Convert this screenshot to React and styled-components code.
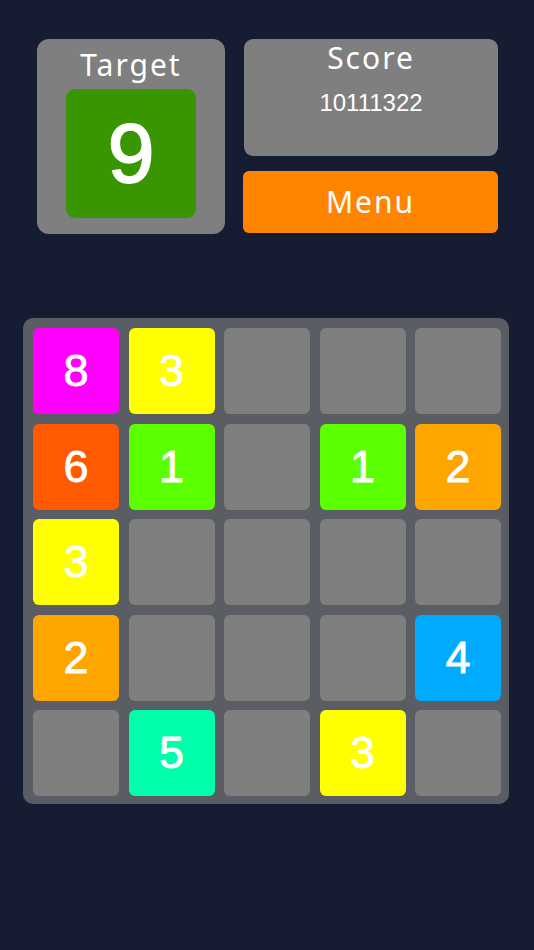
import styled, { createGlobalStyle } from "styled-components";

const GlobalStyle = createGlobalStyle`
  html, body {
    margin: 0;
    padding: 0;
    background: #161c31;
  }
  * {
    box-sizing: border-box;
  }
`;

const board = [
  [8, 3, 0, 0, 0],
  [6, 1, 0, 1, 2],
  [3, 0, 0, 0, 0],
  [2, 0, 0, 0, 4],
  [0, 5, 0, 3, 0],
];

const tileColors = {
  0: "#7f7f7f",
  1: "#5aff00",
  2: "#ffa500",
  3: "#ffff00",
  4: "#00aaff",
  5: "#00ffaa",
  6: "#ff5a00",
  8: "#ff00ff",
  9: "#3a9600",
};

const App = () => {
  return (
    <Page>
      <GlobalStyle />
      <Header>
        <TargetBox>
          <Label>Target</Label>
          <TargetTile>9</TargetTile>
        </TargetBox>
        <SideColumn>
          <ScoreBox>
            <Label>Score</Label>
            <ScoreValue>10111322</ScoreValue>
          </ScoreBox>
          <MenuButton>Menu</MenuButton>
        </SideColumn>
      </Header>

      <Board>
        {board.flat().map((value, i) => (
          <Cell key={i} $color={tileColors[value]}>
            {value > 0 ? value : ""}
          </Cell>
        ))}
      </Board>
    </Page>
  );
};

const Page = styled.div`
  width: 534px;
  height: 950px;
  background: #161c31;
  padding: 39px 0 0 23px;
`;

const Header = styled.div`
  display: flex;
  gap: 19px;
  padding-left: 14px;
`;

const Label = styled.div`
  font-family: "Noto Sans", "Open Sans", sans-serif;
  font-size: 30px;
  letter-spacing: 2px;
  color: #ffffff;
  line-height: 1;
`;

const TargetBox = styled.div`
  width: 188px;
  height: 195px;
  background: #7f7f7f;
  border-radius: 12px;
  display: flex;
  flex-direction: column;
  align-items: center;
  padding-top: 11px;
  gap: 9px;
`;

const TargetTile = styled.div`
  width: 130px;
  height: 129px;
  background: #3a9600;
  border-radius: 9px;
  display: flex;
  align-items: center;
  justify-content: center;
  font-family: "Liberation Sans", Arial, sans-serif;
  font-size: 84px;
  color: #ffffff;
  -webkit-text-stroke: 1.8px #ffffff;
`;

const SideColumn = styled.div`
  width: 254px;
  display: flex;
  flex-direction: column;
  gap: 15px;
`;

const ScoreBox = styled.div`
  height: 117px;
  background: #7f7f7f;
  border-radius: 9px;
  display: flex;
  flex-direction: column;
  align-items: center;
  padding-top: 4px;
  gap: 18px;
`;

const ScoreValue = styled.div`
  font-family: "Liberation Sans", Arial, sans-serif;
  font-size: 24px;
  color: #ffffff;
  line-height: 1;
`;

const MenuButton = styled.div`
  height: 62px;
  margin-left: -1px;
  background: #ff8400;
  border-radius: 6px;
  display: flex;
  align-items: center;
  justify-content: center;
  font-family: "Noto Sans", "Open Sans", sans-serif;
  font-size: 30px;
  letter-spacing: 2px;
  color: #ffffff;
  padding-bottom: 2px;
`;

const Board = styled.div`
  margin-top: 84px;
  width: 486px;
  height: 486px;
  background: #5a5d63;
  border-radius: 10px;
  padding: 10px 8px 8px 10px;
  display: grid;
  grid-template-columns: repeat(5, 1fr);
  grid-template-rows: repeat(5, 1fr);
  gap: 9.5px;
`;

const Cell = styled.div`
  background: ${({ $color }) => $color};
  border-radius: 6px;
  display: flex;
  align-items: center;
  justify-content: center;
  font-family: "Liberation Sans", Arial, sans-serif;
  font-size: 45px;
  color: #ffffff;
  -webkit-text-stroke: 0.8px #ffffff;
`;

export default App;
